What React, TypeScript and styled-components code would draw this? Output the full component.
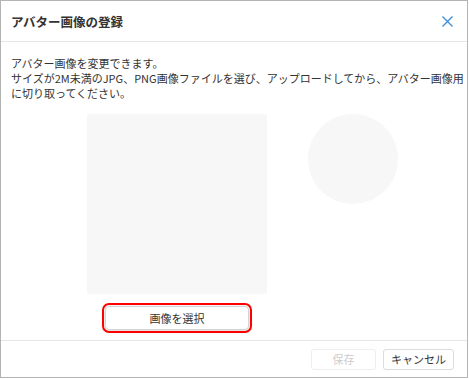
import React from 'react'
import styled, { createGlobalStyle } from 'styled-components'

const GlobalStyle = createGlobalStyle`
  body {
    margin: 0;
    background: #ffffff;
    font-family: "Noto Sans CJK JP", "Noto Sans", sans-serif;
    color: #333333;
  }
`

function AvatarDialog() {
  return (
    <Dialog>
      <Header>
        <Title>アバター画像の登録</Title>
        <CloseButton aria-label="閉じる">
          <svg width="11" height="11" viewBox="0 0 11 11">
            <path d="M0.5 0.5 L10.5 10.5 M10.5 0.5 L0.5 10.5" stroke="#3f8fdc" strokeWidth="1.4" />
          </svg>
        </CloseButton>
      </Header>
      <Body>
        <Description>
          アバター画像を変更できます。
          <br />
          サイズが2M未満のJPG、PNG画像ファイルを選び、アップロードしてから、アバター画像用
          <br />
          に切り取ってください。
        </Description>
        <PreviewRow>
          <CropColumn>
            <CropArea />
            <SelectButton>画像を選択</SelectButton>
          </CropColumn>
          <AvatarPreview />
        </PreviewRow>
      </Body>
      <Footer>
        <FooterButton disabled>保存</FooterButton>
        <FooterButton>キャンセル</FooterButton>
      </Footer>
    </Dialog>
  )
}

export default function App() {
  return (
    <>
      <GlobalStyle />
      <AvatarDialog />
    </>
  )
}

const Dialog = styled.div`
  width: 468px;
  height: 378px;
  box-sizing: border-box;
  border: 1px solid #b4b4b4;
  background: #ffffff;
  display: flex;
  flex-direction: column;
`

const Header = styled.header`
  height: 40px;
  flex-shrink: 0;
  display: flex;
  align-items: center;
  justify-content: space-between;
  padding: 0 10px 0 10px;
  border-bottom: 1px solid #e6e6e6;
`

const Title = styled.h1`
  margin: 0;
  font-size: 12.5px;
  font-weight: 700;
  color: #333333;
`

const CloseButton = styled.button`
  border: none;
  background: none;
  padding: 0;
  width: 12px;
  height: 12px;
  display: flex;
  align-items: center;
  justify-content: center;
  margin-right: 4px;
  cursor: pointer;
`

const Body = styled.section`
  flex: 1;
  padding: 14px 10px 0 10px;
`

const Description = styled.p`
  margin: 0;
  font-size: 11px;
  line-height: 15px;
  white-space: nowrap;
  color: #333333;
`

const PreviewRow = styled.div`
  display: flex;
  align-items: flex-start;
  margin-top: 13px;
  padding-left: 76px;
  gap: 41px;
`

const CropColumn = styled.div`
  display: flex;
  flex-direction: column;
  align-items: center;
  width: 180px;
`

const CropArea = styled.div`
  width: 180px;
  height: 180px;
  background: #f7f7f7;
  border-radius: 2px;
`

const AvatarPreview = styled.div`
  width: 90px;
  height: 90px;
  border-radius: 50%;
  background: #f7f7f7;
`

const SelectButton = styled.button`
  margin-top: 12px;
  width: 144px;
  height: 24px;
  border: 1px solid #d4d4d4;
  border-radius: 4px;
  background: #ffffff;
  box-shadow: 0 1px 4px rgba(0, 0, 0, 0.18);
  outline: 2px solid #ff0000;
  outline-offset: 1px;
  font-family: inherit;
  font-size: 11px;
  color: #333333;
  padding: 0;
  cursor: pointer;
`

const Footer = styled.footer`
  height: 36px;
  flex-shrink: 0;
  display: flex;
  align-items: center;
  justify-content: flex-end;
  gap: 7px;
  padding: 0 13px 0 0;
  border-top: 1px solid #e6e6e6;
`

const FooterButton = styled.button`
  height: 21px;
  min-width: 65px;
  padding: 0 7px;
  border: 1px solid #dcdcdc;
  border-radius: 3px;
  background: #ffffff;
  font-family: inherit;
  font-size: 11px;
  color: #333333;
  cursor: pointer;

  &:disabled {
    border-color: #eeeeee;
    color: #cccccc;
    cursor: default;
  }
`
